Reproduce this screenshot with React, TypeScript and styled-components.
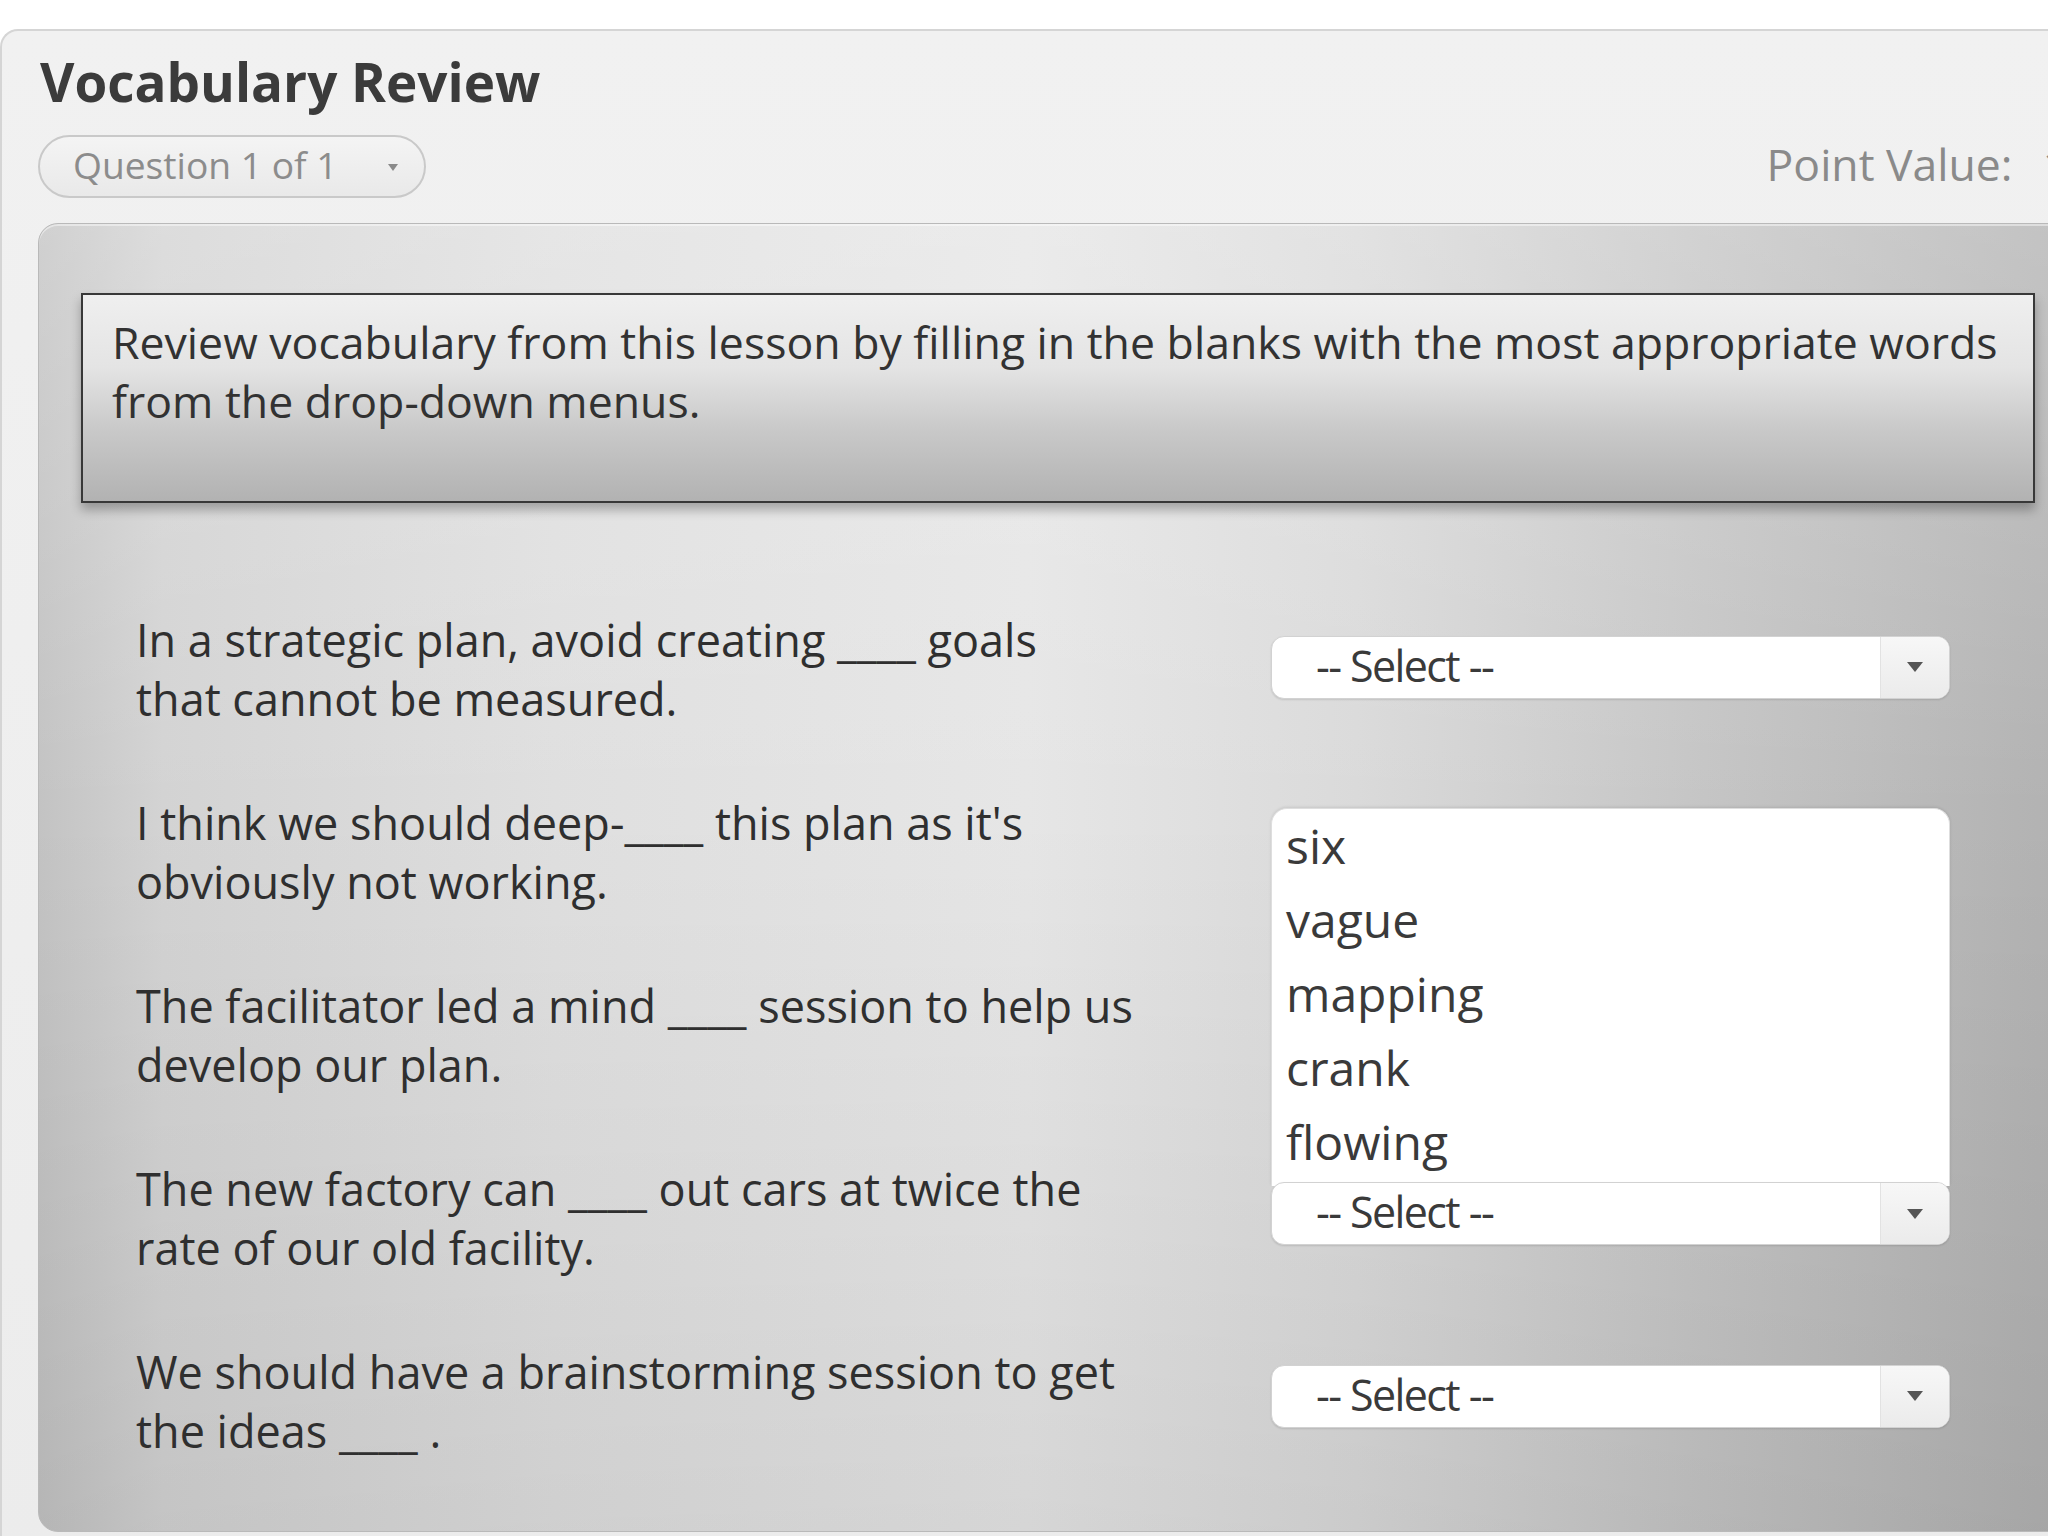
import React from 'react'
import styled, { createGlobalStyle } from 'styled-components'

const GlobalStyle = createGlobalStyle`
  html, body {
    margin: 0;
    background: #ffffff;
    overflow: hidden;
  }
  body {
    font-family: "Open Sans", "Noto Sans", Arial, sans-serif;
    color: #333333;
  }
`

const Card = styled.div`
  box-sizing: border-box;
  width: 2100px;
  margin-top: 29px;
  padding: 24px 0 20px 36px;
  background: linear-gradient(to bottom, #f1f1f1, #ececec);
  border: 2px solid #d5d5d5;
  border-right: none;
  border-radius: 18px 0 0 0;
`

const Title = styled.h1`
  margin: 0 0 0 2px;
  font-size: 53px;
  line-height: 53px;
  font-weight: 700;
  color: #3b3b3b;
`

const MetaRow = styled.div`
  display: flex;
  align-items: center;
  justify-content: space-between;
  height: 63px;
  margin-top: 27px;
  padding-right: 32px;
`

const QuestionPill = styled.div`
  box-sizing: border-box;
  display: flex;
  align-items: center;
  gap: 50px;
  height: 63px;
  padding: 0 26px 4px 33px;
  border: 2px solid #c9c9c9;
  border-radius: 32px;
  background: linear-gradient(to bottom, #f4f4f4, #e9e9e9);
  font-size: 37.2px;
  color: #8c8c8c;
`

const PillArrow = styled.span`
  width: 0;
  height: 0;
  margin-top: 6px;
  border-left: 5px solid transparent;
  border-right: 5px solid transparent;
  border-top: 7px solid #8a8a8a;
`

const PointValue = styled.div`
  display: flex;
  gap: 30px;
  padding-bottom: 6px;
  font-size: 44.5px;
  color: #8a8a8a;
`

const Panel = styled.div`
  box-sizing: border-box;
  margin-top: 25px;
  padding: 69px 0 71px 0;
  border: 1px solid #b9b9b9;
  border-radius: 20px 0 0 20px;
  box-shadow: inset 0 2px 0 rgba(255, 255, 255, 0.45);
  background:
    linear-gradient(to bottom, rgba(255, 255, 255, 0.22) 0%, rgba(255, 255, 255, 0) 45%, rgba(0, 0, 0, 0.07) 100%),
    linear-gradient(to right, #c3c3c3 0%, #d3d3d3 6%, #dfdfdf 25%, #e6e6e6 48%, #dadada 64%, #c6c6c6 80%, #b4b4b4 96%, #b0b0b0 100%);
`

const Instructions = styled.div`
  box-sizing: border-box;
  height: 210px;
  margin: 0 64px 0 42px;
  padding: 17px 20px 0 29px;
  border: 2px solid #383838;
  background: linear-gradient(to bottom, #efefef 0%, #e4e4e4 35%, #c9c9c9 65%, #b2b2b2 100%);
  box-shadow: 0 7px 10px rgba(0, 0, 0, 0.28);
  font-size: 44.6px;
  line-height: 59px;
  color: #323232;
`

const QuestionList = styled.div`
  display: flex;
  flex-direction: column;
  gap: 65px;
  margin-top: 107px;
  padding: 0 149px 0 97px;
`

const QuestionRow = styled.div`
  display: grid;
  grid-template-columns: 1fr 679px;
  align-items: center;
`

const Prompt = styled.div`
  font-size: 45px;
  line-height: 59px;
  white-space: nowrap;
  color: #2f2f2f;
`

// the selects drift up a little against the prompts, row by row
const SelectWrap = styled.div<{ $row: number }>`
  position: relative;
  margin-top: ${(p) => -4 - Math.round(p.$row * 1.6)}px;
`

/* selects that sit behind the open option list are not visible */
const SelectBox = styled.div<{ $raised?: boolean; $covered?: boolean }>`
  position: relative;
  z-index: ${(p) => (p.$raised ? 3 : 1)};
  visibility: ${(p) => (p.$covered ? 'hidden' : 'visible')};
  box-sizing: border-box;
  display: flex;
  height: 63px;
  background: #ffffff;
  border: 1px solid #d2d2d2;
  border-radius: 13px;
  box-shadow: 0 1px 2px rgba(0, 0, 0, 0.12);
  overflow: hidden;
`

const SelectLabel = styled.div`
  flex: 1;
  padding: 0 0 4px 44px;
  display: flex;
  align-items: center;
  font-size: 43px;
  letter-spacing: -1.6px;
  color: #3a3a3a;
`

const SelectButton = styled.div`
  width: 68px;
  display: flex;
  align-items: center;
  justify-content: center;
  border-left: 1px solid #e2e2e2;
  background: linear-gradient(to bottom, #f7f7f7, #ebebeb);
`

const Caret = styled.span`
  width: 0;
  height: 0;
  border-left: 8px solid transparent;
  border-right: 8px solid transparent;
  border-top: 10px solid #555555;
`

const OptionMenu = styled.ul`
  position: absolute;
  z-index: 2;
  left: 0;
  right: 0;
  bottom: calc(100% - 4px);
  box-sizing: border-box;
  margin: 0;
  padding: 0 0 7px 0;
  list-style: none;
  background: #ffffff;
  border: 1px solid #dedede;
  border-bottom: none;
  border-radius: 16px 16px 0 0;
  box-shadow: 0 -1px 3px rgba(0, 0, 0, 0.1);
`

const OptionItem = styled.li`
  padding-left: 14px;
  font-size: 48px;
  line-height: 74px;
  color: #3a3a3a;
`

type Question = {
  lines: [string, string]
  open?: boolean
  covered?: boolean
}

const questions: Question[] = [
  { lines: ['In a strategic plan, avoid creating ____ goals', 'that cannot be measured.'] },
  { lines: ["I think we should deep-____ this plan as it's", 'obviously not working.'], covered: true },
  { lines: ['The facilitator led a mind ____ session to help us', 'develop our plan.'], covered: true },
  { lines: ['The new factory can ____ out cars at twice the', 'rate of our old facility.'], open: true },
  { lines: ['We should have a brainstorming session to get', 'the ideas ____ .'] },
]

const options = ['six', 'vague', 'mapping', 'crank', 'flowing']

function Select({ row, open, covered }: { row: number; open?: boolean; covered?: boolean }) {
  return (
    <SelectWrap $row={row}>
      {open && (
        <OptionMenu>
          {options.map((o) => (
            <OptionItem key={o}>{o}</OptionItem>
          ))}
        </OptionMenu>
      )}
      <SelectBox $raised={open} $covered={covered}>
        <SelectLabel>-- Select --</SelectLabel>
        <SelectButton>
          <Caret />
        </SelectButton>
      </SelectBox>
    </SelectWrap>
  )
}

export default function App() {
  return (
    <>
      <GlobalStyle />
      <Card>
        <Title>Vocabulary Review</Title>
        <MetaRow>
          <QuestionPill>
            <span>Question 1 of 1</span>
            <PillArrow />
          </QuestionPill>
          <PointValue>
            <span>Point Value:</span>
            <span>1</span>
          </PointValue>
        </MetaRow>
        <Panel>
          <Instructions>
            Review vocabulary from this lesson by filling in the blanks with the most appropriate words
            <br />
            from the drop-down menus.
          </Instructions>
          <QuestionList>
            {questions.map((q, i) => (
              <QuestionRow key={i}>
                <Prompt>
                  {q.lines[0]}
                  <br />
                  {q.lines[1]}
                </Prompt>
                <Select row={i} open={q.open} covered={q.covered} />
              </QuestionRow>
            ))}
          </QuestionList>
        </Panel>
      </Card>
    </>
  )
}
